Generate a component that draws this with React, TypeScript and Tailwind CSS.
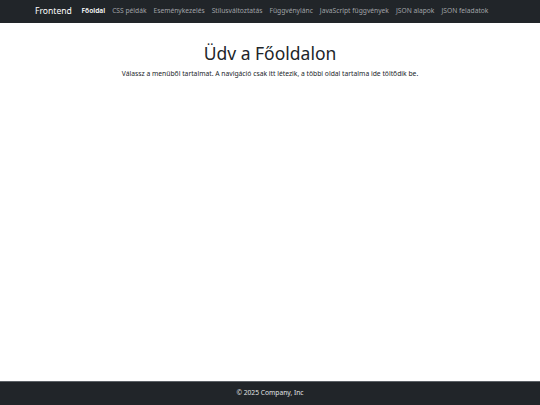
import React from "react";

const links = [
  "Főoldal",
  "CSS példák",
  "Eseménykezelés",
  "Stílusváltoztatás",
  "Függvénylánc",
  "JavaScript függvények",
  "JSON alapok",
  "JSON feladatok",
];

export default function App() {
  return (
    <div
      className="flex h-[405px] w-full flex-col bg-white"
      style={{ fontFamily: '"Noto Sans", "Open Sans", sans-serif' }}
    >
      <nav className="flex h-[23px] shrink-0 items-center bg-[#212529] pl-[35px]">
        <span className="mr-[6px] whitespace-nowrap text-[8.6px] leading-none text-white">Frontend</span>
        <ul className="flex items-center whitespace-nowrap">
          {links.map((l, i) => (
            <li
              key={l}
              className={
                i === 0
                  ? "px-[3.5px] text-[6.7px] font-semibold leading-none text-white"
                  : "px-[3.5px] text-[6.7px] leading-none text-[#a0a3a7]"
              }
            >
              {l}
            </li>
          ))}
        </ul>
      </nav>
      <main className="flex flex-1 flex-col items-center pt-[19px]">
        <h1 className="text-[17.5px] leading-[22px] text-[#212529]">Üdv a Főoldalon</h1>
        <p className="mt-[5px] text-[6.75px] leading-[10px] text-[#212529]">
          Válassz a menüből tartalmat. A navigáció csak itt létezik, a többi oldal tartalma ide töltődik be.
        </p>
      </main>
      <footer className="flex h-[24px] shrink-0 items-center justify-center border-t border-[#5c6166] bg-[#212529]">
        <span className="text-[6.7px] leading-none text-[#e0e2e4]">© 2025 Company, Inc</span>
      </footer>
    </div>
  );
}
